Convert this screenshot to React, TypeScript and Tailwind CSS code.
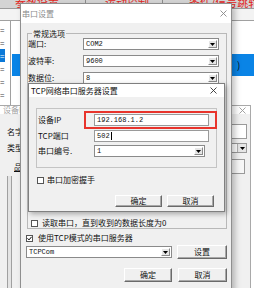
import React from "react";

const XIcon = ({ color = "#555" }: { color?: string }) => (
  <svg width="7" height="7" viewBox="0 0 7 7">
    <path d="M0.5 0.5L6.5 6.5M6.5 0.5L0.5 6.5" stroke={color} strokeWidth="0.9" fill="none" />
  </svg>
);

const Arrow = () => (
  <svg width="5" height="3" viewBox="0 0 5 3">
    <path d="M0 0h5L2.5 3z" fill="#000" />
  </svg>
);

const Combo = ({ cls, text }: { cls: string; text: string }) => (
  <div className={`flex bg-white border border-[#8a8a8a] ${cls}`}>
    <div className="flex-1 flex items-center pl-[2px] font-['Liberation_Mono',monospace] text-[7px] leading-none overflow-hidden whitespace-nowrap">
      {text}
    </div>
    <div className="w-[9px] my-[1px] mr-[1px] bg-[#e6e6e6] border border-t-white border-l-white border-r-[#8a8a8a] border-b-[#8a8a8a] flex items-center justify-center">
      <Arrow />
    </div>
  </div>
);

const Input = ({ cls, children }: { cls: string; children: React.ReactNode }) => (
  <div className={`flex items-center bg-white border border-[#9a9a9a] pl-[2px] font-['Liberation_Mono',monospace] text-[7px] leading-none whitespace-nowrap ${cls}`}>
    {children}
  </div>
);

const Btn = ({ cls, children }: { cls: string; children: React.ReactNode }) => (
  <div className={`flex items-center justify-center bg-[#f0f0f0] border border-t-white border-l-white border-r-[#6a6a6a] border-b-[#6a6a6a] shadow-[inset_-1px_-1px_0_#a8a8a8] text-[8px] leading-none ${cls}`}>
    {children}
  </div>
);

const Check = ({ checked = false }: { checked?: boolean }) => (
  <div className="w-[7px] h-[7px] shrink-0 bg-white border border-[#555] flex items-center justify-center">
    {checked && (
      <svg width="5" height="5" viewBox="0 0 5 5">
        <path d="M0.5 2.3L2 3.9L4.6 0.8" stroke="#000" strokeWidth="1" fill="none" />
      </svg>
    )}
  </div>
);

function Background() {
  return (
    <div className="absolute inset-0 flex flex-col">
      <div className="h-[9px] flex bg-[#d4d4d4] border-b border-[#9c9c9c] overflow-hidden">
        <div className="w-[86px] border-r border-[#8c8c8c] flex items-start pl-[15px] overflow-hidden">
          <span className="mt-[-3px] text-[11px] leading-[11px] text-[#e2231a] whitespace-nowrap">参数设置</span>
        </div>
        <div className="w-[77px] border-r border-[#8c8c8c] flex items-start pl-[19px] overflow-hidden">
          <span className="mt-[-3px] text-[11px] leading-[11px] text-[#e2231a] whitespace-nowrap">运动控制</span>
        </div>
        <div className="flex-1 flex items-start pl-[26px] overflow-hidden">
          <span className="mt-[-3px] text-[11px] leading-[11px] text-[#e2231a] whitespace-nowrap">条件/信号跳转</span>
        </div>
      </div>
      <div className="h-[12px] bg-[#f3f3f3] border-b border-[#a0a0a0]" />
      <div className="flex-1 flex bg-white">
        <div className="w-[11px] border-r border-[#a0a0a0] flex flex-col pt-[2px] text-[8px] text-[#444]">
          <div className="h-[13px] flex items-center">=</div>
          <div className="h-[13px] flex items-center">=</div>
          <div className="h-[13px] flex items-center w-[5px] bg-[#0a78d8] text-white">=</div>
          <div className="h-[13px] flex items-center">=</div>
          <div className="h-[13px] flex items-center">=</div>
          <div className="h-[13px] flex items-center">=</div>
        </div>
        <div className="w-[9px] flex flex-col pt-[33px] pl-[1px]">
          <div className="h-[22px] bg-[#0a84e6]" />
        </div>
        <div className="flex-1" />
        <div className="w-[22px] flex flex-col pt-[33px]">
          <div className="h-[22px] bg-[#0a84e6] flex items-center pl-[5px] text-[10px] text-[#111]">)</div>
        </div>
      </div>
    </div>
  );
}

function DeviceDialog() {
  return (
    <div className="absolute left-[-1px] top-[105px] w-[252px] h-[190px] border border-[#a9a9a9] bg-[#f0f0f0] flex flex-col">
      <div className="h-[13px] bg-white flex items-center justify-between pl-[3px] pr-[4px] text-[#a3a3a3]">
        <span>设备IO设置</span>
        <XIcon color="#999" />
      </div>
      <div className="flex flex-col pl-[7px]">
        <div className="mt-[10px] h-[15px] flex items-center">
          <span>名字</span>
          <div className="ml-auto mr-[3px] w-[200px] h-[15px] bg-white border border-[#9a9a9a]" />
        </div>
        <div className="mt-[4px] h-[10px] flex items-center">
          <span>类型</span>
          <div className="ml-auto mr-[3px] w-[200px] h-[10px] bg-white border border-[#9a9a9a] flex justify-end">
            <div className="w-[9px] bg-[#e6e6e6] border-l border-[#b0b0b0] flex items-center justify-center">
              <Arrow />
            </div>
          </div>
        </div>
        <div className="mt-[6px] h-[15px] flex items-center">
          <span className="ml-[7px] underline">品</span>
          <div className="ml-auto mr-[5px] w-[150px] h-[15px] bg-[#f7f7f7] border border-[#9a9a9a]" />
        </div>
        <div className="ml-[0px] mt-[2px] w-[5px] h-[120px] border-l border-r border-[#a0a0a0] bg-[#e4e4e4]" />
      </div>
    </div>
  );
}

function SerialDialog() {
  return (
    <div className="absolute left-[20px] top-[3px] w-[212px] h-[300px] border border-[#8f8f8f] bg-[#f0f0f0] shadow-[3px_3px_6px_rgba(0,0,0,0.25)] flex flex-col">
      <div className="h-[19px] bg-white flex items-center justify-between pl-[1px] pr-[4px] text-[#8c8c8c]">
        <span>串口设置</span>
        <XIcon color="#888" />
      </div>
      <div className="flex flex-col">
        <div className="relative ml-[6px] mt-[10px] w-[200px] h-[196px] border border-[#b8b8b8] flex flex-col">
          <span className="absolute left-[4px] top-[-5px] px-[1px] bg-[#f0f0f0] leading-[9px]">常规选项</span>
          <div className="pt-[4px] flex flex-col gap-[5px]">
            <div className="h-[12px] flex items-center">
              <span className="w-[55px]">端口:</span>
              <Combo cls="w-[136px] h-[12px]" text="COM2" />
            </div>
            <div className="h-[12px] flex items-center">
              <span className="w-[55px]">波特率:</span>
              <Combo cls="w-[136px] h-[12px]" text="9600" />
            </div>
            <div className="h-[12px] flex items-center">
              <span className="w-[55px]">数据位:</span>
              <Combo cls="w-[136px] h-[12px]" text="8" />
            </div>
          </div>
          <div className="flex-1" />
          <div className="flex items-center gap-[4px] pl-[3px] pb-[1px]">
            <Check />
            <span>读取串口，直到收到的数据长度为0</span>
          </div>
        </div>
        <div className="ml-[5px] mt-[5px] flex items-center gap-[5px]">
          <Check checked />
          <span>使用TCP模式的串口服务器</span>
        </div>
        <div className="ml-[5px] mt-[3px] w-[201px] h-[14px] flex items-center justify-between">
          <Combo cls="w-[146px] h-[12px]" text="TCPCom" />
          <Btn cls="w-[50px] h-[14px]">设置</Btn>
        </div>
        <div className="mt-[9px] flex justify-end gap-[6px] pr-[4px]">
          <Btn cls="w-[48px] h-[14px]">确定</Btn>
          <Btn cls="w-[49px] h-[14px]">取消</Btn>
        </div>
      </div>
    </div>
  );
}

function TcpDialog() {
  return (
    <div className="absolute left-[28px] top-[83px] w-[197px] h-[129px] border border-[#7f7f7f] bg-[#f0f0f0] shadow-[2px_2px_5px_rgba(0,0,0,0.3)] flex flex-col">
      <div className="h-[13px] bg-white flex items-center justify-between pl-[2px] pr-[7px]">
        <span>TCP网络串口服务器设置</span>
        <XIcon color="#333" />
      </div>
      <div className="flex flex-col pl-[7px]">
        <div className="mt-[11px] w-[181px] h-[60px] border border-[#c4c4c4] flex flex-col pl-[1px] pt-[5px]">
          <div className="h-[12px] flex items-center">
            <span className="w-[56px]">设备IP</span>
            <Input cls="w-[115px] h-[12px]">192.168.1.2</Input>
          </div>
          <div className="mt-[4px] h-[12px] flex items-center">
            <span className="w-[56px]">TCP端口</span>
            <Input cls="w-[115px] h-[12px]">
              502<span className="ml-[1px] w-[1px] h-[8px] bg-black" />
            </Input>
          </div>
          <div className="mt-[3px] h-[12px] flex items-center">
            <span className="w-[56px]">串口编号.</span>
            <Combo cls="w-[111px] h-[12px]" text="1" />
          </div>
        </div>
        <div className="mt-[8px] flex items-center gap-[3px] pl-[1px]">
          <Check />
          <span>串口加密握手</span>
        </div>
        <div className="mt-[11px] flex justify-end gap-[5px] pr-[10px]">
          <Btn cls="w-[47px] h-[12px]">确定</Btn>
          <Btn cls="w-[47px] h-[12px]">取消</Btn>
        </div>
      </div>
      <div className="absolute left-[55px] top-[27px] w-[133px] h-[18px] border-2 border-[#e8342c]" />
    </div>
  );
}

export default function App() {
  return (
    <div className="relative w-[254px] h-[288px] overflow-hidden bg-[#f4f4f4] font-['Noto_Sans_CJK_SC',sans-serif] text-[8px] leading-none text-[#111]">
      <Background />
      <DeviceDialog />
      <SerialDialog />
      <TcpDialog />
    </div>
  );
}
